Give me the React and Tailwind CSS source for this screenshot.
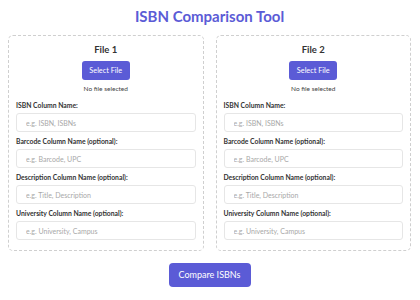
const fields = [
  { label: 'ISBN Column Name:', placeholder: 'e.g. ISBN, ISBNs' },
  { label: 'Barcode Column Name (optional):', placeholder: 'e.g. Barcode, UPC' },
  { label: 'Description Column Name (optional):', placeholder: 'e.g. Title, Description' },
  { label: 'University Column Name (optional):', placeholder: 'e.g. University, Campus' },
];

function FileCard({ title }) {
  return (
    <div className="border border-dashed border-[#cfcfcf] rounded-[5px] px-[7px] pt-[5px] pb-[7px]">
      <div className="flex flex-col items-center">
        <h2 className="text-[9.5px] leading-[18px] font-bold text-[#333]">{title}</h2>
        <button className="mt-[2px] h-[19px] w-[48px] rounded-[3px] bg-[#5b5bd6] text-white text-[7.3px] leading-none">
          Select File
        </button>
        <p className="mt-[3px] text-[6.5px] leading-[12px] text-[#444]">No file selected</p>
      </div>
      <div className="mt-[4px] flex flex-col">
        {fields.map((f) => (
          <div key={f.label} className="mb-[3px]">
            <label className="block text-[6.8px] leading-[12px] font-bold text-[#333]">{f.label}</label>
            <input
              placeholder={f.placeholder}
              className="block mt-[2px] w-full h-[19px] px-[9px] border border-[#e6e6e6] rounded-[3px] text-[7px] text-[#333] placeholder:text-[#a8a8a8] outline-none"
            />
          </div>
        ))}
      </div>
    </div>
  );
}

export default function App() {
  return (
    <div className="w-[420px] h-[300px] bg-white pl-[8px] pr-[9px] pt-[4px] font-['Lato',sans-serif]">
      <h1 className="text-center text-[15px] leading-[24px] font-bold text-[#5b5bd6]">ISBN Comparison Tool</h1>
      <div className="mt-[7px] grid grid-cols-2 gap-[12px]">
        <FileCard title="File 1" />
        <FileCard title="File 2" />
      </div>
      <div className="mt-[12px] flex justify-center">
        <button className="w-[82px] h-[24px] rounded-[4px] bg-[#5b5bd6] text-white text-[9px]">
          Compare ISBNs
        </button>
      </div>
    </div>
  );
}
